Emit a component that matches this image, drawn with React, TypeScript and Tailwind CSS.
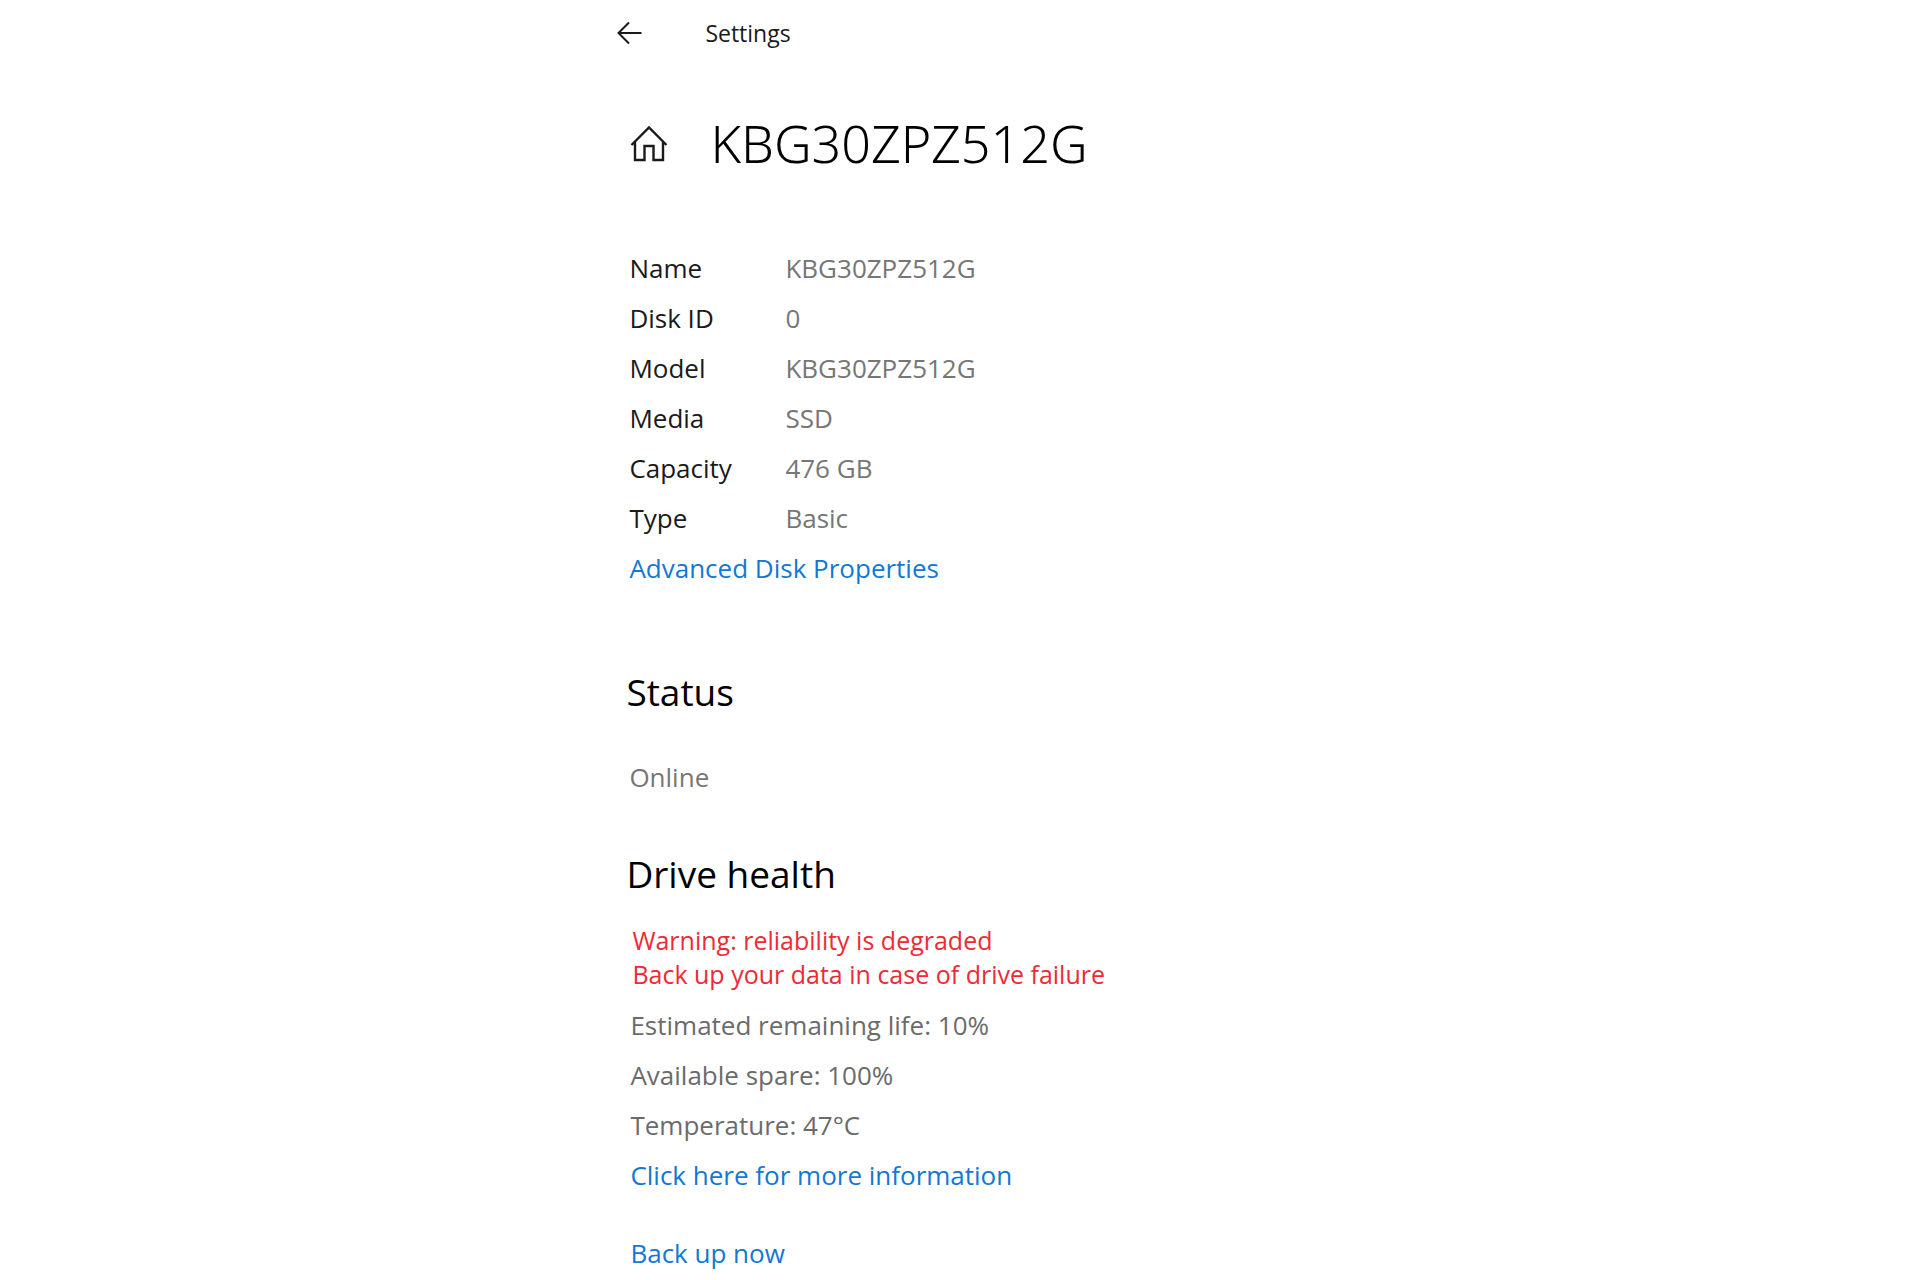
const details = [
  ["Name", "KBG30ZPZ512G"],
  ["Disk ID", "0"],
  ["Model", "KBG30ZPZ512G"],
  ["Media", "SSD"],
  ["Capacity", "476 GB"],
  ["Type", "Basic"],
];

const health = [
  "Estimated remaining life: 10%",
  "Available spare: 100%",
  "Temperature: 47°C",
];

function BackIcon() {
  return (
    <svg width="26" height="24" viewBox="0 0 26 24" fill="none" stroke="currentColor" strokeWidth="2" aria-hidden="true">
      <path d="M24.500 12H1.500M12 1.500L1.500 12l10.500 10.500" />
    </svg>
  );
}

function HomeIcon() {
  return (
    <svg width="38" height="38" viewBox="0 0 38 38" fill="none" stroke="currentColor" strokeWidth="2.400" aria-hidden="true">
      <path d="M1.500 21L19 3.500L36.500 21M5 18v18h9.500V22h9v14H33V18" />
    </svg>
  );
}

function ActionLink({ children }: { children: string }) {
  return (
    <a href="#" className="block w-fit text-[#1278d4] hover:underline">
      {children}
    </a>
  );
}

export default function App() {
  return (
    <main className="min-h-screen bg-white pl-[32%] font-['Open_Sans','Noto_Sans',sans-serif] text-[26px] leading-[50px] text-[#1a1a1a]">
      <header className="flex h-[66px] items-center gap-[62px] pl-[3px]">
        <button type="button" aria-label="Back">
          <BackIcon />
        </button>
        <span className="text-[23px]">Settings</span>
      </header>

      <div className="mt-[46px] flex items-center gap-[42px] pl-4">
        <a href="#" aria-label="Home">
          <HomeIcon />
        </a>
        <h1 className="font-['Noto_Sans',sans-serif] text-[52px] leading-[62px] font-[350] text-black">KBG30ZPZ512G</h1>
      </div>

      <section className="mt-[69px] pl-[15px]">
        <dl className="grid grid-cols-[156px_1fr]">
          {details.map(([label, value]) => (
            <div key={label} className="col-span-2 grid grid-cols-subgrid">
              <dt>{label}</dt>
              <dd className="text-[#767676]">{value}</dd>
            </div>
          ))}
        </dl>
        <ActionLink>Advanced Disk Properties</ActionLink>
      </section>

      <section className="mt-[74px] pl-3">
        <h2 className="text-[37px] text-black">Status</h2>
        <p className="mt-[35px] pl-[3px] text-[#767676]">Online</p>
      </section>

      <section className="mt-[47px] pl-3">
        <h2 className="text-[37px] text-black">Drive health</h2>
        <div role="alert" className="mt-6 pl-1.5 text-[25px] leading-[34px] text-[#ee2a35]">
          <p>Warning: reliability is degraded</p>
          <p>Back up your data in case of drive failure</p>
        </div>
        <div className="mt-[9px] pl-1 text-[#6b6b6b]">
          {health.map((line) => (
            <p key={line}>{line}</p>
          ))}
          <ActionLink>Click here for more information</ActionLink>
          <div className="mt-7">
            <ActionLink>Back up now</ActionLink>
          </div>
        </div>
      </section>
    </main>
  );
}
